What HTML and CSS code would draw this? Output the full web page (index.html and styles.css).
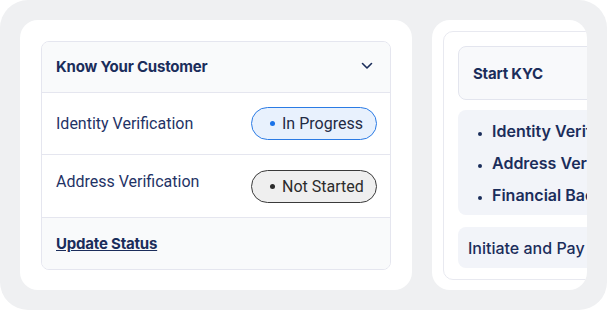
FILE: index.html
```html
<!DOCTYPE html>
<html lang="en">
<head>
  <meta charset="UTF-8">
  <meta name="viewport" content="width=device-width, initial-scale=1.0">
  <title>KYC Status</title>
  <link rel="stylesheet" href="styles.css">
</head>
<body>

  <div class="shell">
    <!-- status accordion -->
    <div class="card">
      <div class="panel">
        <div class="panel-head">
          <span>Know Your Customer</span>
          <svg class="chevron" width="12" height="8" viewBox="0 0 12 8">
            <path d="M1.5 1.5 L6 6 L10.5 1.5" fill="none" stroke="#1b2d5b" stroke-width="1.6" stroke-linecap="round" stroke-linejoin="round"/>
          </svg>
        </div>
        <div class="row">
          <span class="label">Identity Verification</span>
          <span class="badge badge-progress"><i class="dot"></i>In Progress</span>
        </div>
        <div class="row">
          <span class="label label-raised">Address Verification</span>
          <span class="badge badge-idle"><i class="dot"></i>Not Started</span>
        </div>
        <div class="panel-foot">
          <a href="#" class="link">Update Status</a>
        </div>
      </div>
    </div>

    <!-- start kyc, cut off by the card edge -->
    <div class="card card-peek">
      <div class="peek-inner">
        <div class="start-box">Start KYC</div>
        <ul class="steps">
          <li>Identity Verification</li>
          <li>Address Verification</li>
          <li>Financial Background</li>
        </ul>
        <div class="pay-box">Initiate and Pay</div>
      </div>
    </div>
  </div>

</body>
</html>
```

FILE: styles.css
```css
body {
  margin: 0;
  background: #ffffff;
  font-family: Inter, "Noto Sans", sans-serif;
  color: #1b2d5b;
}
.shell {
  width: 607px;
  height: 310px;
  box-sizing: border-box;
  padding: 20px;
  display: flex;
  gap: 20px;
  background: #eff0f2;
  border-radius: 28px;
}
.card {
  width: 392px;
  flex-shrink: 0;
  background: #ffffff;
  border-radius: 18px;
  padding: 21px;
  box-sizing: border-box;
}
.panel {
  border: 1px solid #e5e6ef;
  border-radius: 8px;
  overflow: hidden;
}
.panel-head {
  height: 51px;
  box-sizing: border-box;
  display: flex;
  align-items: center;
  justify-content: space-between;
  padding: 0 17px 2px 14px;
  background: #f9fafb;
  border-bottom: 1px solid #e5e6ef;
  font-size: 15px;
  font-weight: 700;
  letter-spacing: -0.2px;
}
.chevron {
  display: block;
}
.row {
  height: 61px;
  display: flex;
  align-items: center;
  justify-content: space-between;
  padding: 0 13px 0 14px;
  border-bottom: 1px solid #e5e6ef;
  font-family: Roboto, sans-serif;
  font-size: 16px;
}
.row + .row {
  height: 62px;
}
.label {
  color: #1f3366;
}
.label-raised {
  margin-bottom: 9px;
}
.badge {
  width: 126px;
  height: 33px;
  box-sizing: border-box;
  display: flex;
  align-items: center;
  gap: 7px;
  padding-left: 18px;
  border-radius: 17px;
  font-size: 16px;
}
.dot {
  width: 5px;
  height: 5px;
  border-radius: 50%;
  background: currentColor;
}
.badge-progress {
  background: #e8f1fd;
  border: 1px solid #2b7be4;
  color: #1f2a44;
}
.badge-progress .dot {
  background: #1a73e8;
}
.badge-idle {
  background: #efefef;
  border: 1px solid #3a3a3a;
  color: #2b2b2b;
}
.panel-foot {
  height: 51px;
  display: flex;
  align-items: center;
  padding-left: 14px;
  background: #f9fafb;
}
.link {
  color: #1b2d5b;
  font-size: 15px;
  font-weight: 700;
  letter-spacing: -0.2px;
  text-decoration: underline;
}
.card-peek {
  width: 155px;
  padding: 11px 0 10px 11px;
  overflow: hidden;
}
.peek-inner {
  width: 300px;
  height: 249px;
  box-sizing: border-box;
  border: 1px solid #e8e9f0;
  border-radius: 10px;
  padding: 14px;
}
.start-box {
  height: 54px;
  box-sizing: border-box;
  display: flex;
  align-items: center;
  padding-left: 14px;
  border: 1px solid #e3e5ee;
  border-radius: 8px;
  background: #f8f9fb;
  font-size: 15px;
  font-weight: 700;
  letter-spacing: -0.2px;
}
.steps {
  margin: 10px 0 0;
  padding: 5px 0 4px 34px;
  background: #f2f4f9;
  border-radius: 8px;
  line-height: 32px;
  font-size: 16px;
  font-weight: 600;
}
.steps li::marker {
  font-size: 11px;
}
.pay-box {
  margin-top: 12px;
  height: 41px;
  display: flex;
  align-items: center;
  padding-left: 10px;
  background: #f2f4f9;
  border-radius: 8px;
  font-size: 16px;
  font-weight: 500;
}
```
